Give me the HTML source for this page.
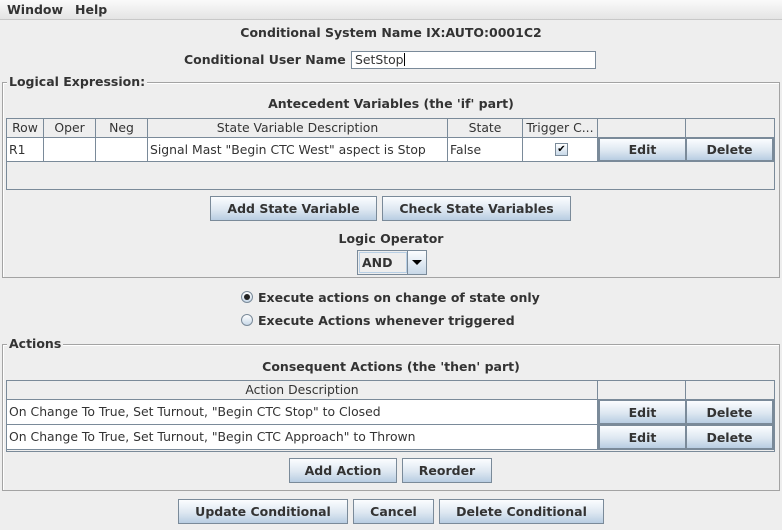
<!DOCTYPE html>
<html><head><meta charset="utf-8"><style>
*{box-sizing:border-box;margin:0;padding:0}
body{width:782px;height:530px;background:#eeeeee;font-family:"DejaVu Sans","Liberation Sans",sans-serif;color:#333;position:relative;overflow:hidden;font-size:12px}
.a{position:absolute}
.b{font-weight:bold;font-size:12.5px;color:#333;white-space:nowrap}
.c{text-align:center}
.btn{position:absolute;border:1px solid #7a8a99;background:linear-gradient(#fbfdff,#dde7f1 55%,#b8cde2);font-weight:bold;font-size:12.5px;color:#333;display:flex;align-items:center;justify-content:center;white-space:nowrap}
.fs{position:absolute;border:1px solid #a3a3a3;box-shadow:inset 1px 1px 0 #fff}
.leg{position:absolute;background:#eeeeee;padding:0 2px;font-weight:bold;font-size:12.5px;line-height:14px}
.tbl{position:absolute;border:1px solid #7a8a99;background:#eeeeee}
.cell{position:absolute;border-right:1px solid #7a8a99;border-bottom:1px solid #7a8a99;white-space:nowrap;overflow:hidden;font-size:12.4px;line-height:18px}
.h{text-align:center;background:#eeeeee}
.w{background:#fff;padding-left:2px}
.tb{position:absolute;border:2px solid #7a8a99;background:linear-gradient(#fbfdff,#dde7f1 55%,#b8cde2);font-weight:bold;font-size:12.5px;display:flex;align-items:center;justify-content:center}
</style></head><body>
<div class="a" style="left:0;top:0;width:782px;height:20px;background:linear-gradient(#fafafa,#e4e4e4);border-bottom:1px solid #c8c8c8"></div>
<div class="a b" style="left:7px;top:2px">Window</div>
<div class="a b" style="left:75px;top:2px">Help</div>

<div class="a b c" style="left:0;width:782px;top:25px">Conditional System Name IX:AUTO:0001C2</div>
<div class="a b" style="left:184px;top:52px">Conditional User Name</div>
<div class="a" style="left:351px;top:51px;width:245px;height:18px;background:#fff;border:1px solid #7a8a99;font-size:12.4px;line-height:16px;padding-left:3px">SetStop<span style="display:inline-block;width:1px;height:13px;background:#000;vertical-align:-2px"></span></div>

<div class="fs" style="left:2px;top:82px;width:778px;height:196px"></div>
<div class="leg" style="left:7px;top:75px">Logical Expression:</div>
<div class="a b c" style="left:0;width:782px;top:96px">Antecedent Variables (the 'if' part)</div>
<div class="tbl" style="left:6px;top:118px;width:769px;height:72px">
<div class="cell h" style="left:0;top:0;width:37px;height:19px">Row</div>
<div class="cell h" style="left:37px;top:0;width:52px;height:19px">Oper</div>
<div class="cell h" style="left:89px;top:0;width:52px;height:19px">Neg</div>
<div class="cell h" style="left:141px;top:0;width:300px;height:19px">State Variable Description</div>
<div class="cell h" style="left:441px;top:0;width:75px;height:19px">State</div>
<div class="cell h" style="left:516px;top:0;width:75px;height:19px">Trigger C...</div>
<div class="cell h" style="left:591px;top:0;width:88px;height:19px"></div>
<div class="cell h" style="left:679px;top:0;width:88px;height:19px;border-right:0"></div>
<div class="cell w" style="left:0;top:19px;width:37px;height:24px;line-height:24px">R1</div>
<div class="cell w" style="left:37px;top:19px;width:52px;height:24px"></div>
<div class="cell w" style="left:89px;top:19px;width:52px;height:24px"></div>
<div class="cell w" style="left:141px;top:19px;width:300px;height:24px;line-height:24px">Signal Mast "Begin CTC West" aspect is Stop</div>
<div class="cell w" style="left:441px;top:19px;width:75px;height:24px;line-height:24px">False</div>
<div class="cell w" style="left:516px;top:19px;width:75px;height:24px"><div class="a" style="left:32px;top:5px;width:13px;height:13px;border:1px solid #7a8a99;background:linear-gradient(#fff,#c8d8e8);font-size:10px;line-height:11px;text-align:center;color:#000">&#10004;</div></div>
<div class="tb" style="left:591px;top:18px;width:89px;height:25px">Edit</div>
<div class="tb" style="left:678px;top:18px;width:89px;height:25px">Delete</div>
</div>
<div class="btn" style="left:210px;top:196px;width:167px;height:25px">Add State Variable</div>
<div class="btn" style="left:382px;top:196px;width:189px;height:25px">Check State Variables</div>
<div class="a b c" style="left:0;width:782px;top:231px">Logic Operator</div>
<div class="a" style="left:357px;top:250px;width:70px;height:25px;border:1px solid #7a8a99;background:#eeeeee">
<div class="a" style="left:1px;top:1px;width:48px;height:21px;border:1px solid #b8cfe5;font-weight:bold;font-size:12.5px;line-height:19px;padding-left:2px">AND</div>
<div class="a" style="left:49px;top:0;width:19px;height:23px;border-left:1px solid #7a8a99;background:linear-gradient(#fbfdff,#c8d8e8)"><div class="a" style="left:4px;top:9px;width:0;height:0;border-left:5px solid transparent;border-right:5px solid transparent;border-top:5px solid #000"></div></div>
</div>

<div class="a" style="left:241px;top:291px;width:12px;height:12px;border-radius:50%;border:1px solid #7a8a99;background:linear-gradient(#fff,#c8d8e8)"><div class="a" style="left:2px;top:2px;width:6px;height:6px;border-radius:50%;background:#222"></div></div>
<div class="a b" style="left:258px;top:290px">Execute actions on change of state only</div>
<div class="a" style="left:241px;top:314px;width:12px;height:12px;border-radius:50%;border:1px solid #7a8a99;background:linear-gradient(#fff,#c8d8e8)"></div>
<div class="a b" style="left:258px;top:313px">Execute Actions whenever triggered</div>

<div class="fs" style="left:2px;top:344px;width:778px;height:147px"></div>
<div class="leg" style="left:7px;top:337px">Actions</div>
<div class="a b c" style="left:0;width:782px;top:359px">Consequent Actions (the 'then' part)</div>
<div class="tbl" style="left:6px;top:380px;width:769px;height:72px">
<div class="cell h" style="left:0;top:0;width:591px;height:19px">Action Description</div>
<div class="cell h" style="left:591px;top:0;width:88px;height:19px"></div>
<div class="cell h" style="left:679px;top:0;width:88px;height:19px;border-right:0"></div>
<div class="cell w" style="left:0;top:19px;width:591px;height:25px;line-height:24px">On Change To True, Set Turnout, "Begin CTC Stop" to Closed</div>
<div class="cell w" style="left:0;top:44px;width:591px;height:25px;line-height:24px">On Change To True, Set Turnout, "Begin CTC Approach" to Thrown</div>
<div class="tb" style="left:591px;top:18px;width:89px;height:26px">Edit</div>
<div class="tb" style="left:678px;top:18px;width:89px;height:26px">Delete</div>
<div class="tb" style="left:591px;top:43px;width:89px;height:26px">Edit</div>
<div class="tb" style="left:678px;top:43px;width:89px;height:26px">Delete</div>
</div>
<div class="btn" style="left:289px;top:458px;width:108px;height:25px">Add Action</div>
<div class="btn" style="left:402px;top:458px;width:90px;height:25px">Reorder</div>

<div class="btn" style="left:178px;top:499px;width:170px;height:25px">Update Conditional</div>
<div class="btn" style="left:353px;top:499px;width:81px;height:25px">Cancel</div>
<div class="btn" style="left:439px;top:499px;width:165px;height:25px">Delete Conditional</div>
</body></html>
